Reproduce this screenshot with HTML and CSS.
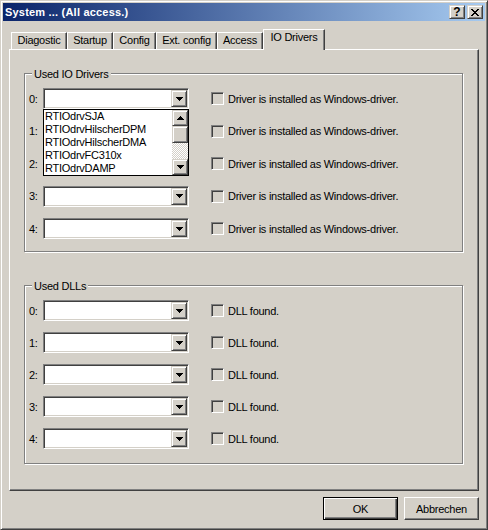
FILE: index.html
```html
<!DOCTYPE html>
<html>
<head>
<meta charset="utf-8">
<link rel="stylesheet" href="styles.css">
</head>
<body>
<div class="window">
  <div class="titlebar">
    <span class="title">System ... (All access.)</span>
    <div class="tb-buttons">
      <div class="tb-btn raised help">?</div>
      <div class="tb-btn raised">
        <svg width="8" height="7" viewBox="0 0 8 7" shape-rendering="crispEdges"><path d="M0 0h2v1h-2zM6 0h2v1h-2zM1 1h2v1h-2zM5 1h2v1h-2zM2 2h4v1h-4zM3 3h2v1h-2zM2 4h4v1h-4zM1 5h2v1h-2zM5 5h2v1h-2zM0 6h2v1h-2zM6 6h2v1h-2z" fill="#000"/></svg>
      </div>
    </div>
  </div>
  <div class="client">
    <div class="tabs">
      <div class="tab w-diag">Diagostic</div>
      <div class="tab w-start">Startup</div>
      <div class="tab w-conf">Config</div>
      <div class="tab w-ext">Ext. config</div>
      <div class="tab w-acc">Access</div>
      <div class="tab w-io active">IO Drivers</div>
    </div>
    <div class="panel">
      <div class="group">
        <div class="group-title">Used IO Drivers</div>
        <div class="rows rows-io">
          <div class="row">
            <span class="idx">0:</span>
            <div class="combo">
              <div class="drop raised"><svg class="arrow" width="7" height="4" viewBox="0 0 7 4" shape-rendering="crispEdges"><path d="M0 0h7v1h-7zM1 1h5v1h-5zM2 2h3v1h-3zM3 3h1v1h-1z" fill="#000"/></svg></div>
              <div class="droplist">
                <div class="items">
                  <div class="item">RTIOdrvSJA</div>
                  <div class="item">RTIOdrvHilscherDPM</div>
                  <div class="item">RTIOdrvHilscherDMA</div>
                  <div class="item">RTIOdrvFC310x</div>
                  <div class="item">RTIOdrvDAMP</div>
                </div>
                <div class="scrollbar">
                  <div class="sb-btn raised"><svg width="7" height="4" viewBox="0 0 7 4" shape-rendering="crispEdges"><path d="M3 0h1v1h-1zM2 1h3v1h-3zM1 2h5v1h-5zM0 3h7v1h-7z" fill="#000"/></svg></div>
                  <div class="sb-thumb raised"></div>
                  <div class="sb-track"></div>
                  <div class="sb-btn raised"><svg width="7" height="4" viewBox="0 0 7 4" shape-rendering="crispEdges"><path d="M0 0h7v1h-7zM1 1h5v1h-5zM2 2h3v1h-3zM3 3h1v1h-1z" fill="#000"/></svg></div>
                </div>
              </div>
            </div>
            <span class="check"></span>
            <span class="check-label">Driver is installed as Windows-driver.</span>
          </div>
          <div class="row">
            <span class="idx">1:</span>
            <div class="combo"><div class="drop raised"><svg class="arrow" width="7" height="4" viewBox="0 0 7 4" shape-rendering="crispEdges"><path d="M0 0h7v1h-7zM1 1h5v1h-5zM2 2h3v1h-3zM3 3h1v1h-1z" fill="#000"/></svg></div></div>
            <span class="check"></span>
            <span class="check-label">Driver is installed as Windows-driver.</span>
          </div>
          <div class="row">
            <span class="idx">2:</span>
            <div class="combo"><div class="drop raised"><svg class="arrow" width="7" height="4" viewBox="0 0 7 4" shape-rendering="crispEdges"><path d="M0 0h7v1h-7zM1 1h5v1h-5zM2 2h3v1h-3zM3 3h1v1h-1z" fill="#000"/></svg></div></div>
            <span class="check"></span>
            <span class="check-label">Driver is installed as Windows-driver.</span>
          </div>
          <div class="row">
            <span class="idx">3:</span>
            <div class="combo"><div class="drop raised"><svg class="arrow" width="7" height="4" viewBox="0 0 7 4" shape-rendering="crispEdges"><path d="M0 0h7v1h-7zM1 1h5v1h-5zM2 2h3v1h-3zM3 3h1v1h-1z" fill="#000"/></svg></div></div>
            <span class="check"></span>
            <span class="check-label">Driver is installed as Windows-driver.</span>
          </div>
          <div class="row">
            <span class="idx">4:</span>
            <div class="combo"><div class="drop raised"><svg class="arrow" width="7" height="4" viewBox="0 0 7 4" shape-rendering="crispEdges"><path d="M0 0h7v1h-7zM1 1h5v1h-5zM2 2h3v1h-3zM3 3h1v1h-1z" fill="#000"/></svg></div></div>
            <span class="check"></span>
            <span class="check-label">Driver is installed as Windows-driver.</span>
          </div>
        </div>
      </div>
      <div class="group group-dll">
        <div class="group-title">Used DLLs</div>
        <div class="rows rows-dll">
          <div class="row">
            <span class="idx">0:</span>
            <div class="combo"><div class="drop raised"><svg class="arrow" width="7" height="4" viewBox="0 0 7 4" shape-rendering="crispEdges"><path d="M0 0h7v1h-7zM1 1h5v1h-5zM2 2h3v1h-3zM3 3h1v1h-1z" fill="#000"/></svg></div></div>
            <span class="check"></span>
            <span class="check-label">DLL found.</span>
          </div>
          <div class="row">
            <span class="idx">1:</span>
            <div class="combo"><div class="drop raised"><svg class="arrow" width="7" height="4" viewBox="0 0 7 4" shape-rendering="crispEdges"><path d="M0 0h7v1h-7zM1 1h5v1h-5zM2 2h3v1h-3zM3 3h1v1h-1z" fill="#000"/></svg></div></div>
            <span class="check"></span>
            <span class="check-label">DLL found.</span>
          </div>
          <div class="row">
            <span class="idx">2:</span>
            <div class="combo"><div class="drop raised"><svg class="arrow" width="7" height="4" viewBox="0 0 7 4" shape-rendering="crispEdges"><path d="M0 0h7v1h-7zM1 1h5v1h-5zM2 2h3v1h-3zM3 3h1v1h-1z" fill="#000"/></svg></div></div>
            <span class="check"></span>
            <span class="check-label">DLL found.</span>
          </div>
          <div class="row">
            <span class="idx">3:</span>
            <div class="combo"><div class="drop raised"><svg class="arrow" width="7" height="4" viewBox="0 0 7 4" shape-rendering="crispEdges"><path d="M0 0h7v1h-7zM1 1h5v1h-5zM2 2h3v1h-3zM3 3h1v1h-1z" fill="#000"/></svg></div></div>
            <span class="check"></span>
            <span class="check-label">DLL found.</span>
          </div>
          <div class="row">
            <span class="idx">4:</span>
            <div class="combo"><div class="drop raised"><svg class="arrow" width="7" height="4" viewBox="0 0 7 4" shape-rendering="crispEdges"><path d="M0 0h7v1h-7zM1 1h5v1h-5zM2 2h3v1h-3zM3 3h1v1h-1z" fill="#000"/></svg></div></div>
            <span class="check"></span>
            <span class="check-label">DLL found.</span>
          </div>
        </div>
      </div>
    </div>
    <div class="actions">
      <div class="btn default">OK</div>
      <div class="btn">Abbrechen</div>
    </div>
  </div>
</div>
</body>
</html>
```
FILE: styles.css
```css
* { box-sizing: border-box; }
html, body { margin: 0; padding: 0; }
body {
  background: #D4D0C8;
  font-family: "Liberation Sans", Arial, sans-serif;
  font-size: 11px;
  letter-spacing: -0.25px;
  color: #000;
}
.window {
  width: 488px;
  height: 530px;
  border: 1px solid;
  border-color: #D4D0C8 #404040 #404040 #D4D0C8;
  box-shadow: inset 1px 1px 0 #fff, inset -1px -1px 0 #808080;
  padding: 2px;
  background: #D4D0C8;
}
.titlebar {
  height: 18px;
  display: flex;
  align-items: center;
  justify-content: space-between;
  padding-left: 2px;
  background: linear-gradient(to right, #0A246A, #A6CAF0);
}
.title {
  color: #fff;
  font-weight: bold;
  letter-spacing: 0.2px;
}
.tb-buttons { display: flex; gap: 2px; margin-right: 2px; }
.raised {
  background: #D4D0C8;
  border: 1px solid;
  border-color: #D4D0C8 #404040 #404040 #D4D0C8;
  box-shadow: inset 1px 1px 0 #fff, inset -1px -1px 0 #808080;
}
.tb-btn {
  width: 16px;
  height: 14px;
  display: flex;
  align-items: center;
  justify-content: center;
}
.help { font-weight: bold; font-size: 12px; line-height: 12px; letter-spacing: 0; }
.client { padding: 0 6px; }
.tabs {
  display: flex;
  align-items: flex-end;
  height: 20px;
  margin-top: 8px;
  padding-left: 2px;
}
.tab {
  height: 17px;
  border-top: 1px solid #fff;
  border-left: 1px solid #fff;
  border-right: 1px solid #404040;
  box-shadow: inset -1px 0 0 #808080;
  text-align: center;
  line-height: 13px;
  padding-top: 1px;
  white-space: nowrap;
}
.tab.active {
  height: 21px;
  margin-bottom: -1px;
  position: relative;
  z-index: 1;
  background: #D4D0C8;
}
.w-diag { width: 56px; }
.w-start { width: 46px; }
.w-conf { width: 43px; }
.w-ext { width: 61px; }
.w-acc { width: 46px; }
.w-io { width: 62px; }
.panel {
  height: 442px;
  border-top: 1px solid #fff;
  border-left: 1px solid #fff;
  border-right: 1px solid #404040;
  border-bottom: 1px solid #404040;
  box-shadow: inset -1px -1px 0 #808080;
  padding: 23px 0 0 14px;
}
.group {
  width: 439px;
  height: 179px;
  border: 1px solid #808080;
  box-shadow: 1px 1px 0 #fff, inset 1px 1px 0 #fff;
}
.group-dll { margin-top: 33px; }
.group-title {
  margin: -6px 0 0 7px;
  padding: 0 2px;
  width: max-content;
  height: 13px;
  line-height: 13px;
  background: #D4D0C8;
}
.rows {
  display: flex;
  flex-direction: column;
  margin-top: 7px;
}
.rows-io { gap: 11.5px; }
.rows-dll { gap: 11px; }
.row {
  display: flex;
  align-items: center;
  height: 21px;
  padding-left: 4px;
}
.idx { width: 14px; }
.combo {
  position: relative;
  width: 146px;
  height: 21px;
  background: #fff;
  border: 1px solid;
  border-color: #808080 #fff #fff #808080;
  box-shadow: inset 1px 1px 0 #404040, inset -1px -1px 0 #D4D0C8;
  padding: 1px;
  display: flex;
  justify-content: flex-end;
}
.drop {
  width: 16px;
  height: 17px;
  display: flex;
  align-items: center;
  justify-content: center;
}
.arrow { display: block; }
.check {
  width: 13px;
  height: 13px;
  margin-left: 22px;
  background: #D4D0C8;
  border: 1px solid;
  border-color: #808080 #fff #fff #808080;
  box-shadow: inset 1px 1px 0 #404040, inset -1px -1px 0 #D4D0C8;
}
.check-label { margin-left: 4px; white-space: nowrap; }
.droplist {
  position: absolute;
  top: calc(100% + 1px);
  left: -1px;
  width: 146px;
  height: 67px;
  border: 1px solid #000;
  background: #fff;
  display: flex;
  z-index: 10;
}
.items { flex: 1; padding-left: 1px; }
.item { height: 13px; line-height: 13px; white-space: nowrap; }
.scrollbar {
  width: 16px;
  display: flex;
  flex-direction: column;
}
.sb-btn {
  height: 16px;
  display: flex;
  align-items: center;
  justify-content: center;
}
.sb-thumb { height: 17px; }
.sb-track {
  flex: 1;
  background: repeating-conic-gradient(#fff 0 25%, #D4D0C8 0 50%) 0 0 / 2px 2px;
}
.actions {
  display: flex;
  justify-content: flex-end;
  gap: 6px;
  margin-top: 6px;
}
.btn {
  width: 75px;
  height: 23px;
  display: flex;
  align-items: center;
  justify-content: center;
  border: 1px solid;
  border-color: #fff #404040 #404040 #fff;
  box-shadow: inset -1px -1px 0 #808080;
}
.btn.default {
  border-color: #000;
  box-shadow: inset 1px 1px 0 #fff, inset -1px -1px 0 #404040, inset -2px -2px 0 #808080;
}
```
